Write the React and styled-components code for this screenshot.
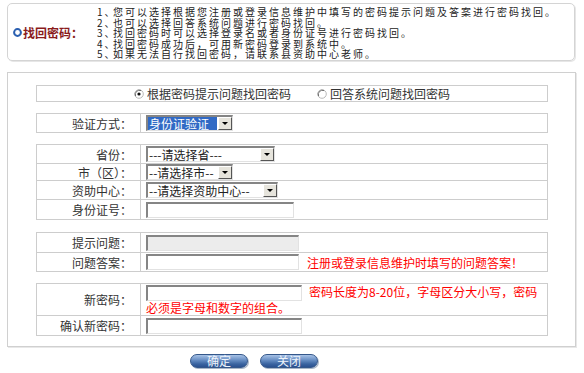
import React from "react";
import styled, { createGlobalStyle, css } from "styled-components";

const GlobalStyle = createGlobalStyle`
  html, body {
    margin: 0;
    padding: 0;
    background: #fff;
  }
  body {
    font-family: "Noto Sans CJK SC", "Liberation Sans", sans-serif;
    font-size: 12px;
    color: #222;
  }
`;

const Page = styled.div`
  width: 584px;
  height: 373px;
  box-sizing: border-box;
  padding: 3px 0 0 7px;
  overflow: hidden;
`;

const Notice = styled.div`
  display: flex;
  width: 568px;
  height: 58px;
  box-sizing: border-box;
  border: 1px solid #d4d4d4;
  border-radius: 5px;
  box-shadow: 1px 1px 0 #e6e6e6;
`;

const NoticeTitle = styled.div`
  display: flex;
  align-items: center;
  gap: 1px;
  width: 89px;
  flex: none;
  box-sizing: border-box;
  padding-left: 5px;
  font-weight: bold;
  color: #8a1c1c;
  white-space: nowrap;
`;

const NoticeList = styled.ol`
  margin: 0;
  padding: 3px 0 0;
  list-style: none;
  font-size: 10px;
  letter-spacing: 2px;
  line-height: 10.5px;
`;

const NoticeItem = styled.li`
  display: flex;
  white-space: nowrap;
`;

const Num = styled.span`
  width: 16px;
  flex: none;
`;

const Panel = styled.div`
  display: flex;
  flex-direction: column;
  gap: 11px;
  margin-top: 11px;
  width: 569px;
  height: 275px;
  box-sizing: border-box;
  border: 1px solid #d0d0d0;
  box-shadow: 1px 1px 0 #e8e8e8;
  padding: 12px 0 0 28px;
`;

const Block = styled.div`
  width: 512px;
  box-sizing: border-box;
  border: 1px solid #cdcdcd;
  ${(p) => p.$gapFix && css`margin-top: 1px;`}
`;

const Row = styled.div`
  display: flex;
  height: ${(p) => p.$h}px;
  box-sizing: border-box;
  & + & {
    border-top: 1px solid #cdcdcd;
  }
`;

const Label = styled.div`
  display: flex;
  align-items: center;
  justify-content: flex-end;
  width: 104px;
  flex: none;
  box-sizing: border-box;
  padding-right: 8px;
  border-right: 1px solid #cdcdcd;
  color: #333;
`;

const Field = styled.div`
  display: flex;
  align-items: center;
  flex: 1;
  padding-left: 5px;
`;

const RadioField = styled.div`
  display: flex;
  align-items: center;
  justify-content: center;
  flex: 1;
  gap: 26px;
  color: #333;
`;

const RadioOption = styled.label`
  display: flex;
  align-items: center;
  gap: 3px;
`;

const WrapField = styled.div`
  flex: 1;
  padding: 1px 0 0 5px;
  line-height: 14px;
`;

const TextInput = styled.input`
  display: inline-block;
  vertical-align: top;
  width: ${(p) => p.$w}px;
  height: 16px;
  box-sizing: border-box;
  margin: 0;
  padding: 0 2px;
  font: inherit;
  border-top: 2px solid #858585;
  border-left: 2px solid #858585;
  border-right: 1px solid #e2e2e2;
  border-bottom: 1px solid #e2e2e2;
  background: ${(p) => (p.disabled ? "#ececec" : "#fff")};
  outline: none;
`;

const Select = styled.div`
  display: flex;
  align-items: center;
  width: ${(p) => p.$w}px;
  height: 16px;
  box-sizing: border-box;
  border-top: 2px solid #858585;
  border-left: 2px solid #858585;
  border-right: 1px solid #e2e2e2;
  border-bottom: 1px solid #e2e2e2;
  background: #fff;
  line-height: 13px;
  color: #222;
`;

const SelectText = styled.span`
  flex: 1;
  padding-left: 1px;
  white-space: nowrap;
  ${(p) =>
    p.$active &&
    css`
      background: #316ac5;
      color: #fff;
      margin-right: 1px;
    `}
`;

const SelectArrow = styled.span`
  display: flex;
  align-items: center;
  justify-content: center;
  width: 14px;
  height: 13px;
  flex: none;
  box-sizing: border-box;
  background: #e6e4dc;
  border-top: 1px solid #fff;
  border-left: 1px solid #fff;
  border-right: 1px solid #555;
  border-bottom: 1px solid #555;
  &::after {
    content: "";
    border-left: 3px solid transparent;
    border-right: 3px solid transparent;
    border-top: 3px solid #000;
  }
`;

const Hint = styled.span`
  margin-left: 8px;
  color: #f00;
  white-space: nowrap;
`;

const WrapHint = styled.span`
  margin-left: 7px;
  color: #f00;
`;

const Actions = styled.div`
  display: flex;
  gap: 12px;
  padding: 7px 0 0 183px;
`;

const Button = styled.button`
  width: 58px;
  height: 14px;
  padding: 0;
  border: 1px solid #34578a;
  border-radius: 7px;
  background: linear-gradient(#a7c2e6 0%, #6b91c6 40%, #3a64a0 75%, #2b5190 100%);
  box-shadow: 1px 1px 0 #a9b6c8;
  color: #eef3fa;
  font: inherit;
  font-size: 12px;
  line-height: 12px;
`;

const Ring = () => (
  <svg width="9" height="9" viewBox="0 0 9 9">
    <circle cx="4.5" cy="4.5" r="3.4" fill="#fff" stroke="#2a5fb0" strokeWidth="2" />
  </svg>
);

const Radio = ({ checked }) => (
  <svg width="10" height="10" viewBox="0 0 10 10">
    <circle cx="5" cy="5" r="4.3" fill="#fff" stroke="#b9b9b9" strokeWidth="1" />
    <path d="M1.5 7 A4.3 4.3 0 0 1 7 1.5" fill="none" stroke="#6a6a6a" strokeWidth="1" />
    {checked && <circle cx="5" cy="5" r="1.6" fill="#111" />}
  </svg>
);

const notes = [
  "您可以选择根据您注册或登录信息维护中填写的密码提示问题及答案进行密码找回。",
  "也可以选择回答系统问题进行密码找回。",
  "找回密码时可以选择登录名或者身份证号进行密码找回。",
  "找回密码成功后，可用新密码登录到系统中。",
  "如果无法自行找回密码，请联系县资助中心老师。",
];

export default function App() {
  return (
    <Page>
      <GlobalStyle />
      <Notice>
        <NoticeTitle>
          <Ring />
          找回密码：
        </NoticeTitle>
        <NoticeList>
          {notes.map((t, i) => (
            <NoticeItem key={i}>
              <Num>{i + 1}、</Num>
              {t}
            </NoticeItem>
          ))}
        </NoticeList>
      </Notice>

      <Panel>
        <Block>
          <Row $h={15}>
            <RadioField>
              <RadioOption>
                <Radio checked />
                根据密码提示问题找回密码
              </RadioOption>
              <RadioOption>
                <Radio />
                回答系统问题找回密码
              </RadioOption>
            </RadioField>
          </Row>
        </Block>

        <Block>
          <Row $h={18}>
            <Label>验证方式：</Label>
            <Field>
              <Select $w={87}>
                <SelectText $active>身份证验证</SelectText>
                <SelectArrow />
              </Select>
            </Field>
          </Row>
        </Block>

        <Block>
          <Row $h={18}>
            <Label>省份：</Label>
            <Field>
              <Select $w={129}>
                <SelectText>---请选择省---</SelectText>
                <SelectArrow />
              </Select>
            </Field>
          </Row>
          <Row $h={17}>
            <Label>市（区）：</Label>
            <Field>
              <Select $w={87}>
                <SelectText>--请选择市--</SelectText>
                <SelectArrow />
              </Select>
            </Field>
          </Row>
          <Row $h={19}>
            <Label>资助中心：</Label>
            <Field>
              <Select $w={132}>
                <SelectText>--请选择资助中心--</SelectText>
                <SelectArrow />
              </Select>
            </Field>
          </Row>
          <Row $h={20}>
            <Label>身份证号：</Label>
            <Field>
              <TextInput $w={148} readOnly />
            </Field>
          </Row>
        </Block>

        <Block $gapFix>
          <Row $h={19}>
            <Label>提示问题：</Label>
            <Field>
              <TextInput $w={153} disabled />
            </Field>
          </Row>
          <Row $h={19}>
            <Label>问题答案：</Label>
            <Field>
              <TextInput $w={153} readOnly />
              <Hint>注册或登录信息维护时填写的问题答案！</Hint>
            </Field>
          </Row>
        </Block>

        <Block>
          <Row $h={31}>
            <Label>新密码：</Label>
            <WrapField>
              <TextInput $w={156} type="password" readOnly />
              <WrapHint>
                密码长度为8-20位，字母区分大小写，密码
                <br />
                必须是字母和数字的组合。
              </WrapHint>
            </WrapField>
          </Row>
          <Row $h={20}>
            <Label>确认新密码：</Label>
            <Field>
              <TextInput $w={156} type="password" readOnly />
            </Field>
          </Row>
        </Block>
      </Panel>

      <Actions>
        <Button>确定</Button>
        <Button>关闭</Button>
      </Actions>
    </Page>
  );
}
